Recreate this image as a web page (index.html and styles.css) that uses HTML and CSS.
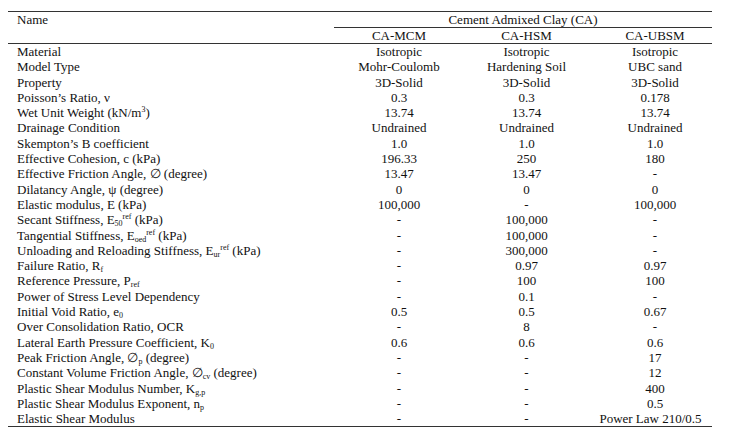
FILE: index.html
```html
<!DOCTYPE html>
<html>
<head>
<meta charset="utf-8">
<link rel="stylesheet" href="styles.css">
</head>
<body>
<div class="page">
<table class="params">
  <colgroup>
    <col class="col-name">
    <col class="col-mcm">
    <col class="col-hsm">
    <col class="col-ubsm">
  </colgroup>
  <thead>
    <tr class="head-top">
      <th class="name-head" rowspan="2">Name</th>
      <th class="group-head" colspan="3">Cement Admixed Clay (CA)</th>
    </tr>
    <tr class="head-sub">
      <th>CA-MCM</th>
      <th>CA-HSM</th>
      <th class="v4">CA-UBSM</th>
    </tr>
  </thead>
  <tbody>
    <tr><td>Material</td><td>Isotropic</td><td>Isotropic</td><td class="v4">Isotropic</td></tr>
    <tr><td>Model Type</td><td>Mohr-Coulomb</td><td>Hardening Soil</td><td class="v4">UBC sand</td></tr>
    <tr><td>Property</td><td>3D-Solid</td><td>3D-Solid</td><td class="v4">3D-Solid</td></tr>
    <tr><td>Poisson’s Ratio, ν</td><td>0.3</td><td>0.3</td><td class="v4">0.178</td></tr>
    <tr><td>Wet Unit Weight (kN/m<sup>3</sup>)</td><td>13.74</td><td>13.74</td><td class="v4">13.74</td></tr>
    <tr><td>Drainage Condition</td><td>Undrained</td><td>Undrained</td><td class="v4">Undrained</td></tr>
    <tr><td>Skempton’s B coefficient</td><td>1.0</td><td>1.0</td><td class="v4">1.0</td></tr>
    <tr><td>Effective Cohesion, c (kPa)</td><td>196.33</td><td>250</td><td class="v4">180</td></tr>
    <tr><td>Effective Friction Angle, ∅ (degree)</td><td>13.47</td><td>13.47</td><td class="v4">-</td></tr>
    <tr><td>Dilatancy Angle, ψ (degree)</td><td>0</td><td>0</td><td class="v4">0</td></tr>
    <tr><td>Elastic modulus, E (kPa)</td><td>100,000</td><td>-</td><td class="v4">100,000</td></tr>
    <tr><td>Secant Stiffness, E<sub>50</sub><sup>ref</sup> (kPa)</td><td>-</td><td>100,000</td><td class="v4">-</td></tr>
    <tr><td>Tangential Stiffness, E<sub>oed</sub><sup>ref</sup> (kPa)</td><td>-</td><td>100,000</td><td class="v4">-</td></tr>
    <tr><td>Unloading and Reloading Stiffness, E<sub>ur</sub><sup>ref</sup> (kPa)</td><td>-</td><td>300,000</td><td class="v4">-</td></tr>
    <tr><td>Failure Ratio, R<sub>f</sub></td><td>-</td><td>0.97</td><td class="v4">0.97</td></tr>
    <tr><td>Reference Pressure, P<sub>ref</sub></td><td>-</td><td>100</td><td class="v4">100</td></tr>
    <tr><td>Power of Stress Level Dependency</td><td>-</td><td>0.1</td><td class="v4">-</td></tr>
    <tr><td>Initial Void Ratio, e<sub>0</sub></td><td>0.5</td><td>0.5</td><td class="v4">0.67</td></tr>
    <tr><td>Over Consolidation Ratio, OCR</td><td>-</td><td>8</td><td class="v4">-</td></tr>
    <tr><td>Lateral Earth Pressure Coefficient, K<sub>0</sub></td><td>0.6</td><td>0.6</td><td class="v4">0.6</td></tr>
    <tr><td>Peak Friction Angle, ∅<sub>p</sub> (degree)</td><td>-</td><td>-</td><td class="v4">17</td></tr>
    <tr><td>Constant Volume Friction Angle, ∅<sub>cv</sub> (degree)</td><td>-</td><td>-</td><td class="v4">12</td></tr>
    <tr><td>Plastic Shear Modulus Number, K<sub>g,p</sub></td><td>-</td><td>-</td><td class="v4">400</td></tr>
    <tr><td>Plastic Shear Modulus Exponent, n<sub>p</sub></td><td>-</td><td>-</td><td class="v4">0.5</td></tr>
    <tr class="last"><td>Elastic Shear Modulus</td><td>-</td><td>-</td><td class="v4-wide">Power Law 210/0.5</td></tr>
  </tbody>
</table>
</div>
</body>
</html>
```

FILE: styles.css
```css
body {
  margin: 0;
  padding: 0;
  background: #ffffff;
  font-family: "Liberation Serif";
}

.page {
  padding: 11px 0 0 8px;
}

.params {
  width: 704px;
  table-layout: fixed;
  border-collapse: collapse;
  font-family: "Liberation Serif";
  font-size: 13px;
  color: #111111;
}

.col-name { width: 326px; }
.col-mcm { width: 130px; }
.col-hsm { width: 125px; }
.col-ubsm { width: 123px; }

.params th,
.params td {
  padding: 0;
  font-family: "Liberation Serif";
  font-weight: normal;
  white-space: nowrap;
  text-align: center;
}

.params th {
  line-height: 15px;
  height: 15px;
  vertical-align: top;
}

.head-top th {
  border-top: 1.5px solid #333333;
}

.name-head {
  text-align: left !important;
  padding-left: 9px !important;
  border-bottom: 1.5px solid #333333;
}

.group-head {
  border-bottom: 1px solid #333333;
}

.head-sub th {
  border-bottom: 1.5px solid #333333;
}

.params tbody td {
  line-height: 15.3px;
  height: 15.3px;
  vertical-align: top;
}

.params tbody td:first-child {
  text-align: left;
  padding-left: 9px;
}

.params .v4 {
  padding-left: 9px;
}

.params .v4-wide {
  padding-left: 0;
}

.last td {
  border-bottom: 1.5px solid #333333;
}

sub,
sup {
  font-size: 8px;
  line-height: 0;
  position: relative;
  vertical-align: baseline;
}

sub {
  top: 2px;
}

sup {
  top: -5px;
}
```
